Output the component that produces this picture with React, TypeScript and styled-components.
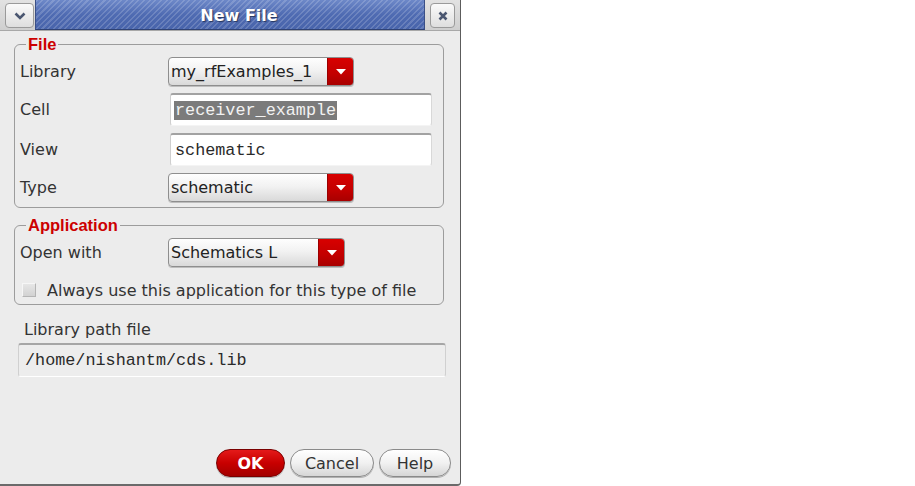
import React from 'react';
import styled, { createGlobalStyle } from 'styled-components';

const Global = createGlobalStyle`
  html, body { margin: 0; padding: 0; background: #ffffff; }
  body { font-family: "DejaVu Sans", "Liberation Sans", sans-serif; }
`;

const Window = styled.div`
  width: 461px;
  height: 486px;
  box-sizing: border-box;
  display: flex;
  flex-direction: column;
  background: #ececec;
  border-right: 1px solid #5c5c5c;
  border-bottom: 2px solid #6a6a6a;
  border-bottom-right-radius: 4px;
`;

const TitleBar = styled.div`
  height: 31px;
  flex: none;
  display: flex;
  align-items: flex-start;
  padding: 0 5px;
  background: linear-gradient(#e2e2e2, #cfcfcf);
  border-bottom: 1px solid #a8a8a8;
  box-sizing: border-box;
`;

const FrameButton = styled.div<{ $w: number }>`
  width: ${(p) => p.$w}px;
  height: 25px;
  margin-top: 3px;
  box-sizing: border-box;
  border: 1px solid #9a9a9a;
  border-radius: 4px;
  background: linear-gradient(#fafafa, #dedede);
  display: flex;
  align-items: center;
  justify-content: center;
  flex: none;
`;

const TitleArea = styled.div`
  flex: 1;
  height: 30px;
  margin: 0 5px 0 1px;
  box-sizing: border-box;
  border-left: 1px solid #3a4f86;
  border-right: 1px solid #3a4f86;
  border-bottom: 1px solid #2f4274;
  background:
    repeating-linear-gradient(135deg, rgba(255,255,255,0.16) 0 1.5px, rgba(0,0,0,0) 1.5px 4px),
    linear-gradient(#6d88c8, #4f6bb2 50%, #4864ab);
  display: flex;
  align-items: center;
  justify-content: center;
  padding-left: 18px;
`;

const Title = styled.span`
  font-family: "DejaVu Sans", sans-serif;
  font-weight: bold;
  font-size: 16px;
  color: #ffffff;
  text-shadow: 1px 1px 1px #26365e;
  margin-top: 2px;
`;

const Body = styled.div`
  flex: 1;
  display: flex;
  flex-direction: column;
  padding: 4px 9px 7px 14px;
`;

const Group = styled.fieldset`
  margin: 0 7px 0 0;
  padding: 4px 0 5px 5px;
  border: 1px solid #9c9c9c;
  border-radius: 6px;
  min-width: 0;
  & + & {
    margin-top: 8px;
  }
`;

const Legend = styled.legend`
  margin-left: 6px;
  padding: 0 2px;
  font-family: "Liberation Sans", Arial, sans-serif;
  font-weight: bold;
  font-size: 16.5px;
  line-height: 18px;
  color: #cc0000;
`;

const FormGrid = styled.div`
  display: grid;
  grid-template-columns: 148px 1fr;
  row-gap: 7px;
  align-items: center;
`;

const Label = styled.span`
  font-size: 16px;
  color: #333333;
  line-height: 19px;
`;

const SelectBox = styled.div<{ $w: number }>`
  width: ${(p) => p.$w}px;
  height: 29px;
  box-sizing: border-box;
  display: flex;
  border: 1px solid #8e8e8e;
  border-radius: 4px;
  background: linear-gradient(#fefefe, #f2f2f2 45%, #d9d9d9);
  box-shadow: 0 1px 0 #bdbdbd;
  overflow: hidden;
`;

const SelectText = styled.span`
  flex: 1;
  padding-left: 2px;
  font-size: 16px;
  line-height: 27px;
  color: #222222;
  white-space: nowrap;
  overflow: hidden;
`;

const SelectArrow = styled.span`
  width: 25px;
  flex: none;
  background: linear-gradient(#d80000, #c20000 60%, #a80000);
  border-left: 1px solid #9a0000;
  display: flex;
  align-items: center;
  justify-content: center;
`;

const TextField = styled.div`
  width: 262px;
  height: 33px;
  margin-left: 2px;
  box-sizing: border-box;
  background: #ffffff;
  border-top: 2px solid #a2a2a2;
  border-left: 1px solid #cfcfcf;
  border-right: 1px solid #d8d8d8;
  border-bottom: 1px solid #f4f4f4;
  border-radius: 3px;
  display: flex;
  align-items: center;
  padding-left: 3px;
`;

const MonoText = styled.span<{ $selected?: boolean }>`
  font-family: "Liberation Mono", "Courier New", monospace;
  font-size: 16.8px;
  line-height: 19px;
  padding: 0 1px;
  color: ${(p) => (p.$selected ? '#f2f2f2' : '#2a2a2a')};
  background: ${(p) => (p.$selected ? '#7b7b7b' : 'transparent')};
`;

const CheckRow = styled.label`
  display: flex;
  align-items: center;
  gap: 11px;
  margin: 14px 0 0 2px;
  height: 18px;
`;

const CheckBox = styled.span`
  width: 14px;
  height: 14px;
  box-sizing: border-box;
  border: 1px solid #b4b4b4;
  border-top-color: #f6f6f6;
  border-left-color: #f6f6f6;
  background: linear-gradient(#e6e6e6, #d2d2d2);
  flex: none;
`;

const PathLabel = styled.div`
  margin-top: 15px;
  padding-left: 10px;
  font-size: 16px;
  line-height: 19px;
  color: #333333;
`;

const PathField = styled.div`
  margin: 4px 5px 0 4px;
  height: 34px;
  box-sizing: border-box;
  border-top: 2px solid #a6a6a6;
  border-left: 1px solid #d0d0d0;
  border-right: 1px solid #d0d0d0;
  border-bottom: 1px solid #ffffff;
  border-radius: 3px;
  background: #ededed;
  display: flex;
  align-items: center;
  padding-left: 5px;
`;

const ButtonRow = styled.div`
  margin-top: auto;
  display: flex;
  justify-content: flex-end;
  gap: 5px;
`;

const PillButton = styled.button<{ $w: number; $primary?: boolean }>`
  width: ${(p) => p.$w}px;
  height: 28px;
  box-sizing: border-box;
  border-radius: 14px;
  padding: 0;
  font-family: "DejaVu Sans", sans-serif;
  font-size: 16px;
  font-weight: ${(p) => (p.$primary ? 'bold' : 'normal')};
  color: ${(p) => (p.$primary ? '#ffffff' : '#333333')};
  border: 1px solid ${(p) => (p.$primary ? '#7a0000' : '#8a8a8a')};
  background: ${(p) =>
    p.$primary
      ? 'linear-gradient(#e41a1a, #c80000 50%, #a30000)'
      : 'linear-gradient(#ffffff, #f1f1f1 50%, #d6d6d6)'};
  box-shadow: 0 1px 0 #b0b0b0;
`;

const Arrow = () => (
  <svg width="10" height="6" viewBox="0 0 10 6">
    <path d="M0 0 H10 L5 5.5 Z" fill="#ffffff" />
  </svg>
);

const Select = ({ w, value }: { w: number; value: string }) => (
  <SelectBox $w={w}>
    <SelectText>{value}</SelectText>
    <SelectArrow>
      <Arrow />
    </SelectArrow>
  </SelectBox>
);

export default function App() {
  return (
    <>
      <Global />
      <Window>
        <TitleBar>
          <FrameButton $w={29}>
            <svg width="12" height="8" viewBox="0 0 12 8">
              <path d="M1.5 1.5 L6 6 L10.5 1.5" stroke="#4a5670" strokeWidth="2.6" fill="none" />
            </svg>
          </FrameButton>
          <TitleArea>
            <Title>New File</Title>
          </TitleArea>
          <FrameButton $w={25}>
            <svg width="10" height="10" viewBox="0 0 10 10">
              <path d="M1.5 1.5 L8.5 8.5 M8.5 1.5 L1.5 8.5" stroke="#4a5670" strokeWidth="2.6" />
            </svg>
          </FrameButton>
        </TitleBar>
        <Body>
          <Group>
            <Legend>File</Legend>
            <FormGrid>
              <Label>Library</Label>
              <Select w={186} value="my_rfExamples_1" />
              <Label>Cell</Label>
              <TextField>
                <MonoText $selected>receiver_example</MonoText>
              </TextField>
              <Label>View</Label>
              <TextField>
                <MonoText>schematic</MonoText>
              </TextField>
              <Label>Type</Label>
              <Select w={186} value="schematic" />
            </FormGrid>
          </Group>
          <Group>
            <Legend>Application</Legend>
            <FormGrid>
              <Label>Open with</Label>
              <Select w={177} value="Schematics L" />
            </FormGrid>
            <CheckRow>
              <CheckBox />
              <Label>Always use this application for this type of file</Label>
            </CheckRow>
          </Group>
          <PathLabel>Library path file</PathLabel>
          <PathField>
            <MonoText>/home/nishantm/cds.lib</MonoText>
          </PathField>
          <ButtonRow>
            <PillButton $w={69} $primary>OK</PillButton>
            <PillButton $w={84}>Cancel</PillButton>
            <PillButton $w={72}>Help</PillButton>
          </ButtonRow>
        </Body>
      </Window>
    </>
  );
}
